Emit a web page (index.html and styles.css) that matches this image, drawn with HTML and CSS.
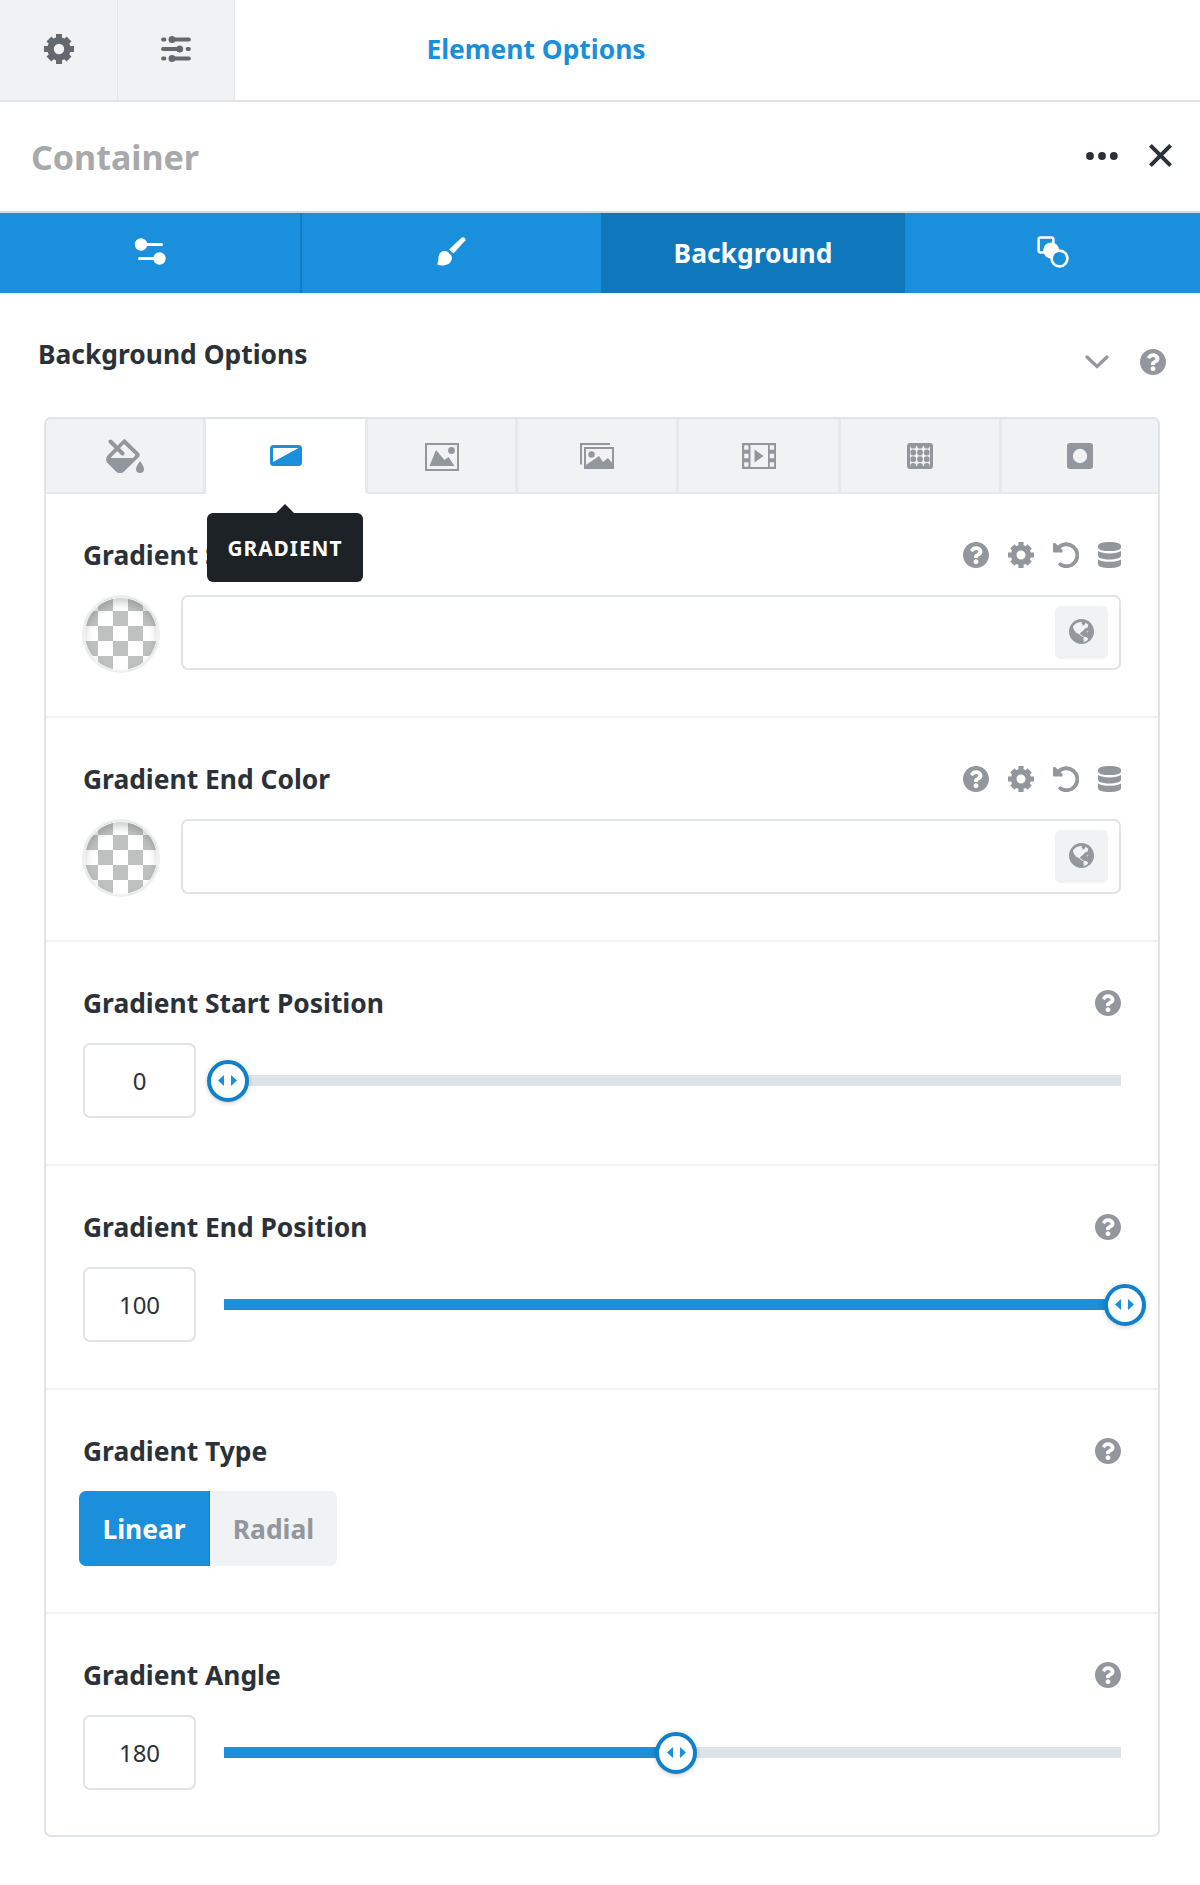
FILE: index.html
```html
<!DOCTYPE html>
<html lang="en">
<head>
    <meta charset="UTF-8">
    <meta name="viewport" content="width=device-width, initial-scale=1.0">
    <title>Element Options</title>
    <link rel="stylesheet" href="styles.css">
</head>
<body>
    <!-- Shared icons -->
    <svg class="sprite" width="0" height="0">
        <symbol id="help" viewBox="8 8 496 496">
            <path d="M504 256c0 136.997-111.043 248-248 248S8 392.997 8 256C8 119.083 119.043 8 256 8s248 111.083 248 248zM262.655 90c-54.497 0-89.255 22.957-116.549 63.758-3.536 5.286-2.353 12.415 2.715 16.258l34.699 26.31c5.205 3.947 12.621 3.008 16.665-2.122 17.864-22.658 30.113-35.797 57.303-35.797 20.429 0 45.698 13.148 45.698 32.958 0 14.976-12.363 22.667-32.534 33.976C247.128 238.528 216 254.941 216 296v4c0 6.627 5.373 12 12 12h56c6.627 0 12-5.373 12-12v-1.333c0-28.462 83.186-29.647 83.186-106.667 0-58.002-60.165-102-116.531-102zM256 338c-25.365 0-46 20.635-46 46 0 25.364 20.635 46 46 46s46-20.636 46-46c0-25.365-20.635-46-46-46z"/>
        </symbol>
        <symbol id="gear" viewBox="0 0 26 26">
            <g fill="none" stroke="currentColor">
                <circle cx="13" cy="13" r="7.3" stroke-width="5.6"/>
                <path stroke-width="5.2" d="M13 0v5M13 21v5M0 13h5M21 13h5"/>
                <path stroke-width="6" d="M4.3 4.3l3 3M18.7 18.7l3 3M4.3 21.7l3-3M18.7 7.3l3-3"/>
            </g>
        </symbol>
        <symbol id="undo" viewBox="0 0 26 26">
            <path fill="none" stroke="currentColor" stroke-width="3.8" d="M4.6 6.6A11 11 0 1 1 6 21.4"/>
            <path d="M0 2Q0 1 1 1h1.2l7.3 7.3v1.2q0 1-1 1H1q-1 0-1-1z"/>
        </symbol>
        <symbol id="database" viewBox="0 0 23 26">
            <path d="M0 3.8C0 1.5 5 0 11.5 0S23 1.5 23 3.8v1.6c0 2.2-5 3.7-11.5 3.7S0 7.6 0 5.4z"/>
            <path d="M0 9c2.5 1.7 6.5 2.4 11.5 2.4S20.500 10.700 23 9v4.8c0 2.2-5 3.7-11.5 3.7S0 16 0 13.800z"/>
            <path d="M0 17.400c2.500 1.700 6.500 2.400 11.500 2.400s9-.7 11.500-2.400v4.800c0 2.300-5 3.800-11.500 3.800S0 24.500 0 22.200z"/>
        </symbol>
        <symbol id="globe" viewBox="0 0 25 25">
            <circle cx="12.5" cy="12.5" r="12.5"/>
            <path fill="#f1f2f4" d="M4 7.500C6 4.500 9 3 13 2.800l-.8 1.700 1.600.6-.6 1.700 2.300-.8 1-2.200 2.800 2-.7 2.700-2.600 1-2 2.600-2.200 1.300-1 1.700 1.800.8 2.200 2.200-2-.6-3-2.400-3-1.500L4.500 10zM14.500 18l2-.3 3 2-1.800 2.300-2.900.9-.3-2.500zM17.500 12.500l2-.4-1 1.600z"/>
        </symbol>
    </svg>

    <header class="topbar">
        <div class="topbar-btn">
            <svg width="30" height="30"><use href="#gear"/></svg>
        </div>
        <div class="topbar-btn">
            <svg width="30" height="26" viewBox="0 0 30 26">
                <path fill="none" stroke="currentColor" stroke-width="3.8" stroke-linecap="round" d="M2 3.500h1.500M11 3.500h17M2 13h17M26.500 13H28M2 22.500h1.500M11 22.500h17"/>
                <circle cx="11" cy="3.5" r="3.5"/>
                <circle cx="18.7" cy="13" r="3.5"/>
                <circle cx="11" cy="22.5" r="3.5"/>
            </svg>
        </div>
        <h1 class="topbar-title">Element Options</h1>
    </header>

    <div class="element-bar">
        <h2>Container</h2>
        <div class="element-actions">
            <svg width="32" height="8" viewBox="0 0 32 8"><circle cx="4" cy="4" r="3.9"/><circle cx="16" cy="4" r="3.9"/><circle cx="27.8" cy="4" r="3.9"/></svg>
            <svg width="23" height="23" viewBox="0 0 23 23"><path fill="none" stroke="currentColor" stroke-width="4" d="M1.400 1.400l20.200 20.200M21.600 1.400L1.400 21.600"/></svg>
        </div>
    </div>

    <nav class="tabs">
        <div class="tab tab-general">
            <svg width="32" height="28" viewBox="0 0 32 28">
                <path fill="none" stroke="currentColor" stroke-width="3" stroke-linecap="round" d="M7 6.500h20.500M5.500 20.500H25"/>
                <circle cx="7" cy="6.5" r="6.2"/>
                <circle cx="25.5" cy="20.5" r="6.2"/>
            </svg>
        </div>
        <div class="tab tab-design">
            <svg width="29" height="29" viewBox="0 0 29 29">
                <path d="M24.500.8q1-.9 2-.6 2.500 1 2 3L16.500 16.500 12 12.500z"/>
                <path d="M1.500 20C2 16 4.500 13.900 8 14q2 0 3 1l3 3q1.200 1.800.9 3.500C14 26.500 10 28.500 5 28.500q-3 0-4.800-1Q1.500 25 1.500 20z"/>
            </svg>
        </div>
        <div class="tab tab-background active">Background</div>
        <div class="tab tab-extras">
            <svg width="32" height="32" viewBox="0 0 32 32">
                <rect x="1.6" y="1.6" width="14.8" height="15" rx="2" fill="none" stroke="currentColor" stroke-width="2.5"/>
                <circle cx="14.2" cy="14.5" r="8"/>
                <circle cx="22.5" cy="22.5" r="7.9" fill="#1a8fdb" stroke="currentColor" stroke-width="2.7"/>
            </svg>
        </div>
    </nav>

    <section class="options">
        <div class="options-head">
            <h3>Background Options</h3>
            <div class="options-tools">
                <svg width="24" height="14" viewBox="0 0 24 14"><path fill="none" stroke="currentColor" stroke-width="3.2" stroke-linecap="round" d="M2 2l10 9.500L22 2"/></svg>
                <svg width="26" height="26"><use href="#help"/></svg>
            </div>
        </div>

        <div class="panel">
            <div class="subtabs">
                <div class="subtab">
                    <svg width="38" height="34" viewBox="0 0 38 34">
                        <path fill-rule="evenodd" d="M18 0q.8 0 1.500.7L33 14q1.600 2 0 4L18 32.500q-4 3.500-8 0L2 24.500q-4-4 0-8.500zM18 5L4.500 19H27l2.500-3z"/>
                        <path fill="none" stroke="currentColor" stroke-width="4" stroke-linecap="round" d="M4.500 2.500L16.500 14.500"/>
                        <path d="M34 22q4 5.500 4 8a4 4 0 0 1-8 0q0-2.500 4-8z"/>
                    </svg>
                </div>
                <div class="subtab active">
                    <svg width="32" height="21" viewBox="0 0 32 21">
                        <rect width="32" height="21" rx="3.5"/>
                        <path fill="#fff" d="M3 3h25.500L3 17z"/>
                    </svg>
                    <span class="tooltip">GRADIENT</span>
                </div>
                <div class="subtab subtab-image">
                    <svg width="34" height="28" viewBox="0 0 34 28">
                        <rect x="1" y="1" width="32" height="26" fill="none" stroke="currentColor" stroke-width="2"/>
                        <path d="M4.500 23L11 7l8.500 10 4-3L29.500 23z"/>
                        <circle cx="26.5" cy="7.5" r="3.4"/>
                    </svg>
                </div>
                <div class="subtab">
                    <svg width="34" height="26" viewBox="0 0 34 26">
                        <path fill="none" stroke="currentColor" stroke-width="2" d="M1 21.500V1h29M5 5h28v20H5z"/>
                        <path d="M5 25v-2.500l6-4L19 13l4 6 5-4 5 6v4z"/>
                        <circle cx="11.5" cy="11.5" r="3.2"/>
                    </svg>
                </div>
                <div class="subtab">
                    <svg width="34" height="26" viewBox="0 0 34 26">
                        <path fill-rule="evenodd" d="M0 0h34v26H0zM8.500 2v22h17.500V2zM2.200 2.200v4.600h4.300V2.200zM2.200 10.700v4.600h4.300v-4.600zM2.200 19.200v4.600h4.300v-4.600zM27.800 2.200v4.600h4.300V2.200zM27.800 10.700v4.600h4.300v-4.600zM27.800 19.200v4.600h4.300v-4.600z"/>
                        <path d="M12.500 6.500v13l9-6.500z"/>
                    </svg>
                </div>
                <div class="subtab">
                    <svg width="26" height="26" viewBox="0 0 26 26">
                        <rect x="1.5" y="1.5" width="23" height="23" rx="1.5" fill="none" stroke="currentColor" stroke-width="3"/>
                        <path fill="none" stroke="currentColor" stroke-width="5.8" stroke-linecap="round" d="M6.200 2.700h0M13 2.700h0M19.800 2.700h0M6.200 9.500h0M13 9.500h0M19.800 9.500h0M6.200 16.200h0M13 16.200h0M19.800 16.200h0M6.200 23h0M13 23h0M19.800 23h0"/>
                    </svg>
                </div>
                <div class="subtab">
                    <svg width="26" height="26" viewBox="0 0 26 26">
                        <rect width="26" height="26" rx="3"/>
                        <circle cx="13" cy="13" r="7.2" fill="#f1f2f4"/>
                    </svg>
                </div>
            </div>

            <div class="option">
                <div class="option-head">
                    <h4>Gradient Start Color</h4>
                    <div class="option-tools">
                        <svg width="26" height="26"><use href="#help"/></svg>
                        <svg width="26" height="26"><use href="#gear"/></svg>
                        <svg width="26" height="26"><use href="#undo"/></svg>
                        <svg width="23" height="26"><use href="#database"/></svg>
                    </div>
                </div>
                <div class="color-field">
                    <div class="swatch"></div>
                    <div class="color-input">
                        <button class="globe-btn"><svg width="25" height="25"><use href="#globe"/></svg></button>
                    </div>
                </div>
            </div>

            <div class="option">
                <div class="option-head">
                    <h4>Gradient End Color</h4>
                    <div class="option-tools">
                        <svg width="26" height="26"><use href="#help"/></svg>
                        <svg width="26" height="26"><use href="#gear"/></svg>
                        <svg width="26" height="26"><use href="#undo"/></svg>
                        <svg width="23" height="26"><use href="#database"/></svg>
                    </div>
                </div>
                <div class="color-field">
                    <div class="swatch"></div>
                    <div class="color-input">
                        <button class="globe-btn"><svg width="25" height="25"><use href="#globe"/></svg></button>
                    </div>
                </div>
            </div>

            <div class="option">
                <div class="option-head">
                    <h4>Gradient Start Position</h4>
                    <svg width="26" height="26"><use href="#help"/></svg>
                </div>
                <div class="range-field">
                    <div class="range-value">0</div>
                    <div class="range-track">
                        <div class="range-fill" style="width: 0%"></div>
                        <div class="range-knob" style="left: 0.4%"><svg width="19" height="11" viewBox="0 0 19 11"><path d="M6 0v11L0 5.500zM13 0v11l6-5.500z"/></svg></div>
                    </div>
                </div>
            </div>

            <div class="option">
                <div class="option-head">
                    <h4>Gradient End Position</h4>
                    <svg width="26" height="26"><use href="#help"/></svg>
                </div>
                <div class="range-field">
                    <div class="range-value">100</div>
                    <div class="range-track">
                        <div class="range-fill" style="width: 100%"></div>
                        <div class="range-knob" style="left: 100.4%"><svg width="19" height="11" viewBox="0 0 19 11"><path d="M6 0v11L0 5.500zM13 0v11l6-5.500z"/></svg></div>
                    </div>
                </div>
            </div>

            <div class="option">
                <div class="option-head">
                    <h4>Gradient Type</h4>
                    <svg width="26" height="26"><use href="#help"/></svg>
                </div>
                <div class="toggle">
                    <div class="toggle-item selected">Linear</div>
                    <div class="toggle-item">Radial</div>
                </div>
            </div>

            <div class="option">
                <div class="option-head">
                    <h4>Gradient Angle</h4>
                    <svg width="26" height="26"><use href="#help"/></svg>
                </div>
                <div class="range-field">
                    <div class="range-value">180</div>
                    <div class="range-track">
                        <div class="range-fill" style="width: 50%"></div>
                        <div class="range-knob" style="left: 50.4%"><svg width="19" height="11" viewBox="0 0 19 11"><path d="M6 0v11L0 5.500zM13 0v11l6-5.500z"/></svg></div>
                    </div>
                </div>
            </div>
        </div>
    </section>
</body>
</html>
```
FILE: styles.css
```css
:root {
    --blue: #1a8fdb;
    --blue-dark: #0f78bd;
    --text: #2b3138;
    --muted: #92979d;
    --gray: #f1f2f4;
    --border: #e0e3e8;
}

* {
    margin: 0;
    padding: 0;
    box-sizing: border-box;
}

body {
    background: #fff;
    color: var(--text);
    font-family: "Noto Sans", sans-serif;
    font-size: 26.4px;
}

svg {
    display: block;
    flex-shrink: 0;
    fill: currentColor;
}

.sprite {
    position: absolute;
}

/* Top bar */
.topbar {
    display: flex;
    height: 102px;
    border-bottom: 2px solid var(--border);
}

.topbar-btn {
    display: flex;
    width: 118px;
    align-items: center;
    justify-content: center;
    padding-bottom: 2px;
    background: var(--gray);
    border-right: 1px solid #e4e6e9;
    color: #63696f;
}

.topbar-btn + .topbar-btn {
    width: 117px;
}

.topbar-title {
    width: 602px;
    line-height: 99px;
    text-align: center;
    font-size: 26.4px;
    color: var(--blue);
}

.element-bar {
    display: flex;
    justify-content: space-between;
    align-items: center;
    height: 111px;
    padding: 0 28px 2px 31px;
    border-bottom: 2px solid #d5dce2;
}

.element-bar h2 {
    padding-top: 2px;
    font-size: 34px;
    color: #a7a9ab;
}

.element-actions {
    display: flex;
    align-items: center;
    gap: 31px;
}

/* Main tabs */
.tabs {
    display: flex;
    height: 80px;
    background: var(--blue);
    color: #fff;
}

.tab {
    display: flex;
    align-items: center;
    justify-content: center;
    padding-bottom: 2px;
}

.tab-general {
    width: 302px;
    border-right: 2px solid #0f7dc3;
}

.tab-design {
    width: 299px;
    padding-bottom: 3px;
}

.tab-background {
    width: 304px;
    padding-bottom: 0;
    font-weight: 700;
}

.tab-extras {
    width: 295px;
}

.tab.active {
    background: var(--blue-dark);
}

/* Options */
.options {
    padding: 0 40px 0 44px;
}

.options-head {
    display: flex;
    justify-content: space-between;
    height: 124px;
    margin: 0 -6px;
}

.options-head h3 {
    font-size: 26.4px;
    line-height: 36px;
    padding-top: 43px;
}

.options-tools {
    display: flex;
    align-items: center;
    height: 26px;
    margin-top: 56px;
    gap: 31px;
    color: var(--muted);
}

.panel {
    border: 2px solid var(--border);
    border-radius: 7px;
}

.subtabs {
    display: grid;
    grid-template-columns: 160px 162px 150px 161px 162px 161px 1fr;
    height: 75px;
    color: var(--muted);
}

.subtab {
    position: relative;
    display: flex;
    align-items: center;
    justify-content: center;
    background: var(--gray);
    border-right: 3px solid #e6e8ea;
    border-bottom: 2px solid #e6e8ea;
}

.subtab:first-child {
    border-top-left-radius: 5px;
}

.subtab:last-child {
    border-right: 0;
    border-top-right-radius: 5px;
}

.subtab-image svg {
    margin-top: 2px;
}

.subtab.active {
    background: #fff;
    border-bottom-color: #fff;
    color: var(--blue);
}

.tooltip {
    position: absolute;
    top: 94px;
    left: 1px;
    width: 156px;
    height: 69px;
    border-radius: 6px;
    background: #1d2226;
    color: #fff;
    font-size: 20.8px;
    font-weight: 700;
    letter-spacing: 1px;
    line-height: 70px;
    text-align: center;
    z-index: 2;
}

.tooltip::before {
    content: "";
    position: absolute;
    left: 69px;
    top: -9px;
    border: 9px solid transparent;
    border-top: 0;
    border-bottom-color: #1d2226;
}

/* Option rows */
.option {
    height: 224px;
    padding: 46px 37px 0;
    border-bottom: 2px solid #f1f2f4;
}

.option:last-child {
    height: 221px;
    border-bottom: 0;
}

.option-head {
    display: flex;
    align-items: center;
    justify-content: space-between;
    height: 30px;
    margin-bottom: 25px;
    color: var(--muted);
}

.option-head h4 {
    font-size: 26.4px;
    line-height: 30px;
    color: var(--text);
}

.option-tools {
    display: flex;
    gap: 19px;
}

.color-field {
    display: flex;
    gap: 21px;
}

.swatch {
    width: 78px;
    height: 78px;
    margin-left: -1px;
    border: 2px solid #efeff0;
    border-radius: 50%;
    background: repeating-conic-gradient(#bec1c0 0 25%, #fff 0 50%) -1px -1px / 30px 30px;
    box-shadow: inset 0 0 0 1px #f6f6f6, inset 0 5px 9px rgba(60, 64, 70, 0.28);
}

.color-input {
    display: flex;
    flex: 1;
    align-items: center;
    justify-content: flex-end;
    height: 75px;
    padding-right: 11px;
    border: 2px solid var(--border);
    border-radius: 7px;
}

.globe-btn {
    display: flex;
    align-items: center;
    justify-content: center;
    width: 53px;
    height: 53px;
    padding-bottom: 3px;
    border: 0;
    border-radius: 6px;
    background: var(--gray);
    color: var(--muted);
}

.range-field {
    display: flex;
    align-items: center;
    gap: 28px;
}

.range-value {
    width: 113px;
    height: 75px;
    border: 2px solid var(--border);
    border-radius: 7px;
    font-size: 24px;
    line-height: 72px;
    text-align: center;
}

.range-track {
    position: relative;
    flex: 1;
    height: 11px;
    background: #dfe2e7;
}

.range-fill {
    height: 100%;
    background: var(--blue);
}

.range-knob {
    position: absolute;
    top: 50%;
    display: flex;
    align-items: center;
    justify-content: center;
    width: 42px;
    height: 42px;
    border: 4px solid #0f80c9;
    border-radius: 50%;
    background: #fff;
    box-shadow: 0 1px 5px rgba(0, 0, 0, 0.2);
    color: var(--blue);
    transform: translate(-50%, -50%);
}

.toggle {
    display: flex;
    width: 258px;
    height: 75px;
    margin-left: -4px;
    border-radius: 7px;
    overflow: hidden;
    background: var(--gray);
    color: var(--muted);
    font-weight: 700;
    line-height: 76px;
    text-align: center;
}

.toggle-item {
    flex: 1;
}

.toggle-item.selected {
    flex: 0 0 131px;
    background: var(--blue);
    border-right: 1px solid #0f80c9;
    color: #fff;
}
```
